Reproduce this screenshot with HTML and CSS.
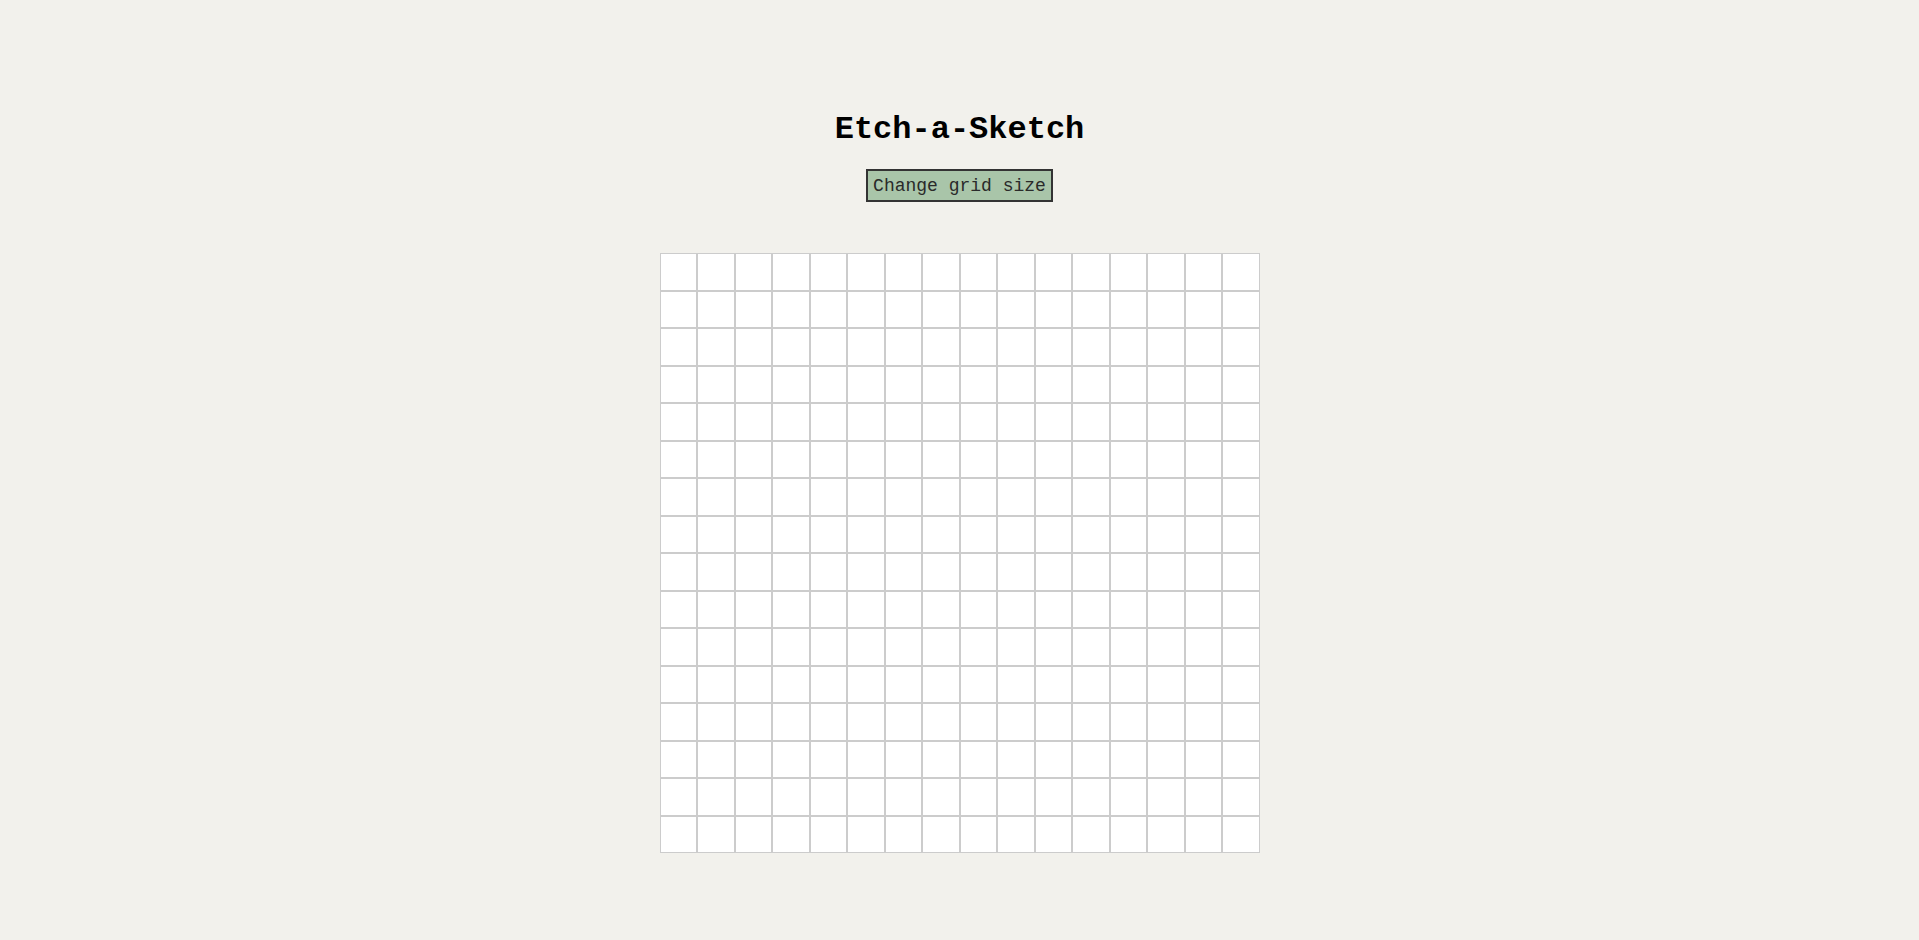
FILE: index.html
```html
<!DOCTYPE html>
<html lang="en">
<head>
<meta charset="utf-8">
<title>Etch-a-Sketch</title>
<link rel="stylesheet" href="styles.css">
</head>
<body>
<main class="page">
<h1 class="title">Etch-a-Sketch</h1>
<button class="resize-btn" type="button">Change grid size</button>
<div class="board">
<div class="cell"></div><div class="cell"></div><div class="cell"></div><div class="cell"></div><div class="cell"></div><div class="cell"></div><div class="cell"></div><div class="cell"></div><div class="cell"></div><div class="cell"></div><div class="cell"></div><div class="cell"></div><div class="cell"></div><div class="cell"></div><div class="cell"></div><div class="cell"></div>
<div class="cell"></div><div class="cell"></div><div class="cell"></div><div class="cell"></div><div class="cell"></div><div class="cell"></div><div class="cell"></div><div class="cell"></div><div class="cell"></div><div class="cell"></div><div class="cell"></div><div class="cell"></div><div class="cell"></div><div class="cell"></div><div class="cell"></div><div class="cell"></div>
<div class="cell"></div><div class="cell"></div><div class="cell"></div><div class="cell"></div><div class="cell"></div><div class="cell"></div><div class="cell"></div><div class="cell"></div><div class="cell"></div><div class="cell"></div><div class="cell"></div><div class="cell"></div><div class="cell"></div><div class="cell"></div><div class="cell"></div><div class="cell"></div>
<div class="cell"></div><div class="cell"></div><div class="cell"></div><div class="cell"></div><div class="cell"></div><div class="cell"></div><div class="cell"></div><div class="cell"></div><div class="cell"></div><div class="cell"></div><div class="cell"></div><div class="cell"></div><div class="cell"></div><div class="cell"></div><div class="cell"></div><div class="cell"></div>
<div class="cell"></div><div class="cell"></div><div class="cell"></div><div class="cell"></div><div class="cell"></div><div class="cell"></div><div class="cell"></div><div class="cell"></div><div class="cell"></div><div class="cell"></div><div class="cell"></div><div class="cell"></div><div class="cell"></div><div class="cell"></div><div class="cell"></div><div class="cell"></div>
<div class="cell"></div><div class="cell"></div><div class="cell"></div><div class="cell"></div><div class="cell"></div><div class="cell"></div><div class="cell"></div><div class="cell"></div><div class="cell"></div><div class="cell"></div><div class="cell"></div><div class="cell"></div><div class="cell"></div><div class="cell"></div><div class="cell"></div><div class="cell"></div>
<div class="cell"></div><div class="cell"></div><div class="cell"></div><div class="cell"></div><div class="cell"></div><div class="cell"></div><div class="cell"></div><div class="cell"></div><div class="cell"></div><div class="cell"></div><div class="cell"></div><div class="cell"></div><div class="cell"></div><div class="cell"></div><div class="cell"></div><div class="cell"></div>
<div class="cell"></div><div class="cell"></div><div class="cell"></div><div class="cell"></div><div class="cell"></div><div class="cell"></div><div class="cell"></div><div class="cell"></div><div class="cell"></div><div class="cell"></div><div class="cell"></div><div class="cell"></div><div class="cell"></div><div class="cell"></div><div class="cell"></div><div class="cell"></div>
<div class="cell"></div><div class="cell"></div><div class="cell"></div><div class="cell"></div><div class="cell"></div><div class="cell"></div><div class="cell"></div><div class="cell"></div><div class="cell"></div><div class="cell"></div><div class="cell"></div><div class="cell"></div><div class="cell"></div><div class="cell"></div><div class="cell"></div><div class="cell"></div>
<div class="cell"></div><div class="cell"></div><div class="cell"></div><div class="cell"></div><div class="cell"></div><div class="cell"></div><div class="cell"></div><div class="cell"></div><div class="cell"></div><div class="cell"></div><div class="cell"></div><div class="cell"></div><div class="cell"></div><div class="cell"></div><div class="cell"></div><div class="cell"></div>
<div class="cell"></div><div class="cell"></div><div class="cell"></div><div class="cell"></div><div class="cell"></div><div class="cell"></div><div class="cell"></div><div class="cell"></div><div class="cell"></div><div class="cell"></div><div class="cell"></div><div class="cell"></div><div class="cell"></div><div class="cell"></div><div class="cell"></div><div class="cell"></div>
<div class="cell"></div><div class="cell"></div><div class="cell"></div><div class="cell"></div><div class="cell"></div><div class="cell"></div><div class="cell"></div><div class="cell"></div><div class="cell"></div><div class="cell"></div><div class="cell"></div><div class="cell"></div><div class="cell"></div><div class="cell"></div><div class="cell"></div><div class="cell"></div>
<div class="cell"></div><div class="cell"></div><div class="cell"></div><div class="cell"></div><div class="cell"></div><div class="cell"></div><div class="cell"></div><div class="cell"></div><div class="cell"></div><div class="cell"></div><div class="cell"></div><div class="cell"></div><div class="cell"></div><div class="cell"></div><div class="cell"></div><div class="cell"></div>
<div class="cell"></div><div class="cell"></div><div class="cell"></div><div class="cell"></div><div class="cell"></div><div class="cell"></div><div class="cell"></div><div class="cell"></div><div class="cell"></div><div class="cell"></div><div class="cell"></div><div class="cell"></div><div class="cell"></div><div class="cell"></div><div class="cell"></div><div class="cell"></div>
<div class="cell"></div><div class="cell"></div><div class="cell"></div><div class="cell"></div><div class="cell"></div><div class="cell"></div><div class="cell"></div><div class="cell"></div><div class="cell"></div><div class="cell"></div><div class="cell"></div><div class="cell"></div><div class="cell"></div><div class="cell"></div><div class="cell"></div><div class="cell"></div>
<div class="cell"></div><div class="cell"></div><div class="cell"></div><div class="cell"></div><div class="cell"></div><div class="cell"></div><div class="cell"></div><div class="cell"></div><div class="cell"></div><div class="cell"></div><div class="cell"></div><div class="cell"></div><div class="cell"></div><div class="cell"></div><div class="cell"></div><div class="cell"></div>
</div>
</main>
</body>
</html>
```

FILE: styles.css
```css
* {
  box-sizing: border-box;
}

html, body {
  margin: 0;
  padding: 0;
  background: #f2f1ec;
  font-family: "Courier New", Courier, "Nimbus Mono PS", "Nimbus Mono L", FreeMono, "Liberation Mono", monospace;
  color: #000;
}

.page {
  display: flex;
  flex-direction: column;
  align-items: center;
  padding-top: 112px;
}

.title {
  margin: 0;
  font-size: 32px;
  font-weight: bold;
  line-height: 36px;
}

.resize-btn {
  margin-top: 21px;
  font-family: "Courier New", Courier, "Nimbus Mono PS", "Nimbus Mono L", FreeMono, "Liberation Mono", monospace;
  font-size: 18px;
  line-height: 20px;
  padding: 5px 5px 4px;
  background: #a9c5a9;
  color: #2a2a2a;
  border: 2px solid #333;
  border-radius: 0;
}

.board {
  margin-top: 51px;
  width: 600px;
  height: 600px;
  display: grid;
  grid-template-columns: repeat(16, 1fr);
  grid-template-rows: repeat(16, 1fr);
}

.cell {
  background: #fff;
  border: 1px solid #cccccc;
}
```
